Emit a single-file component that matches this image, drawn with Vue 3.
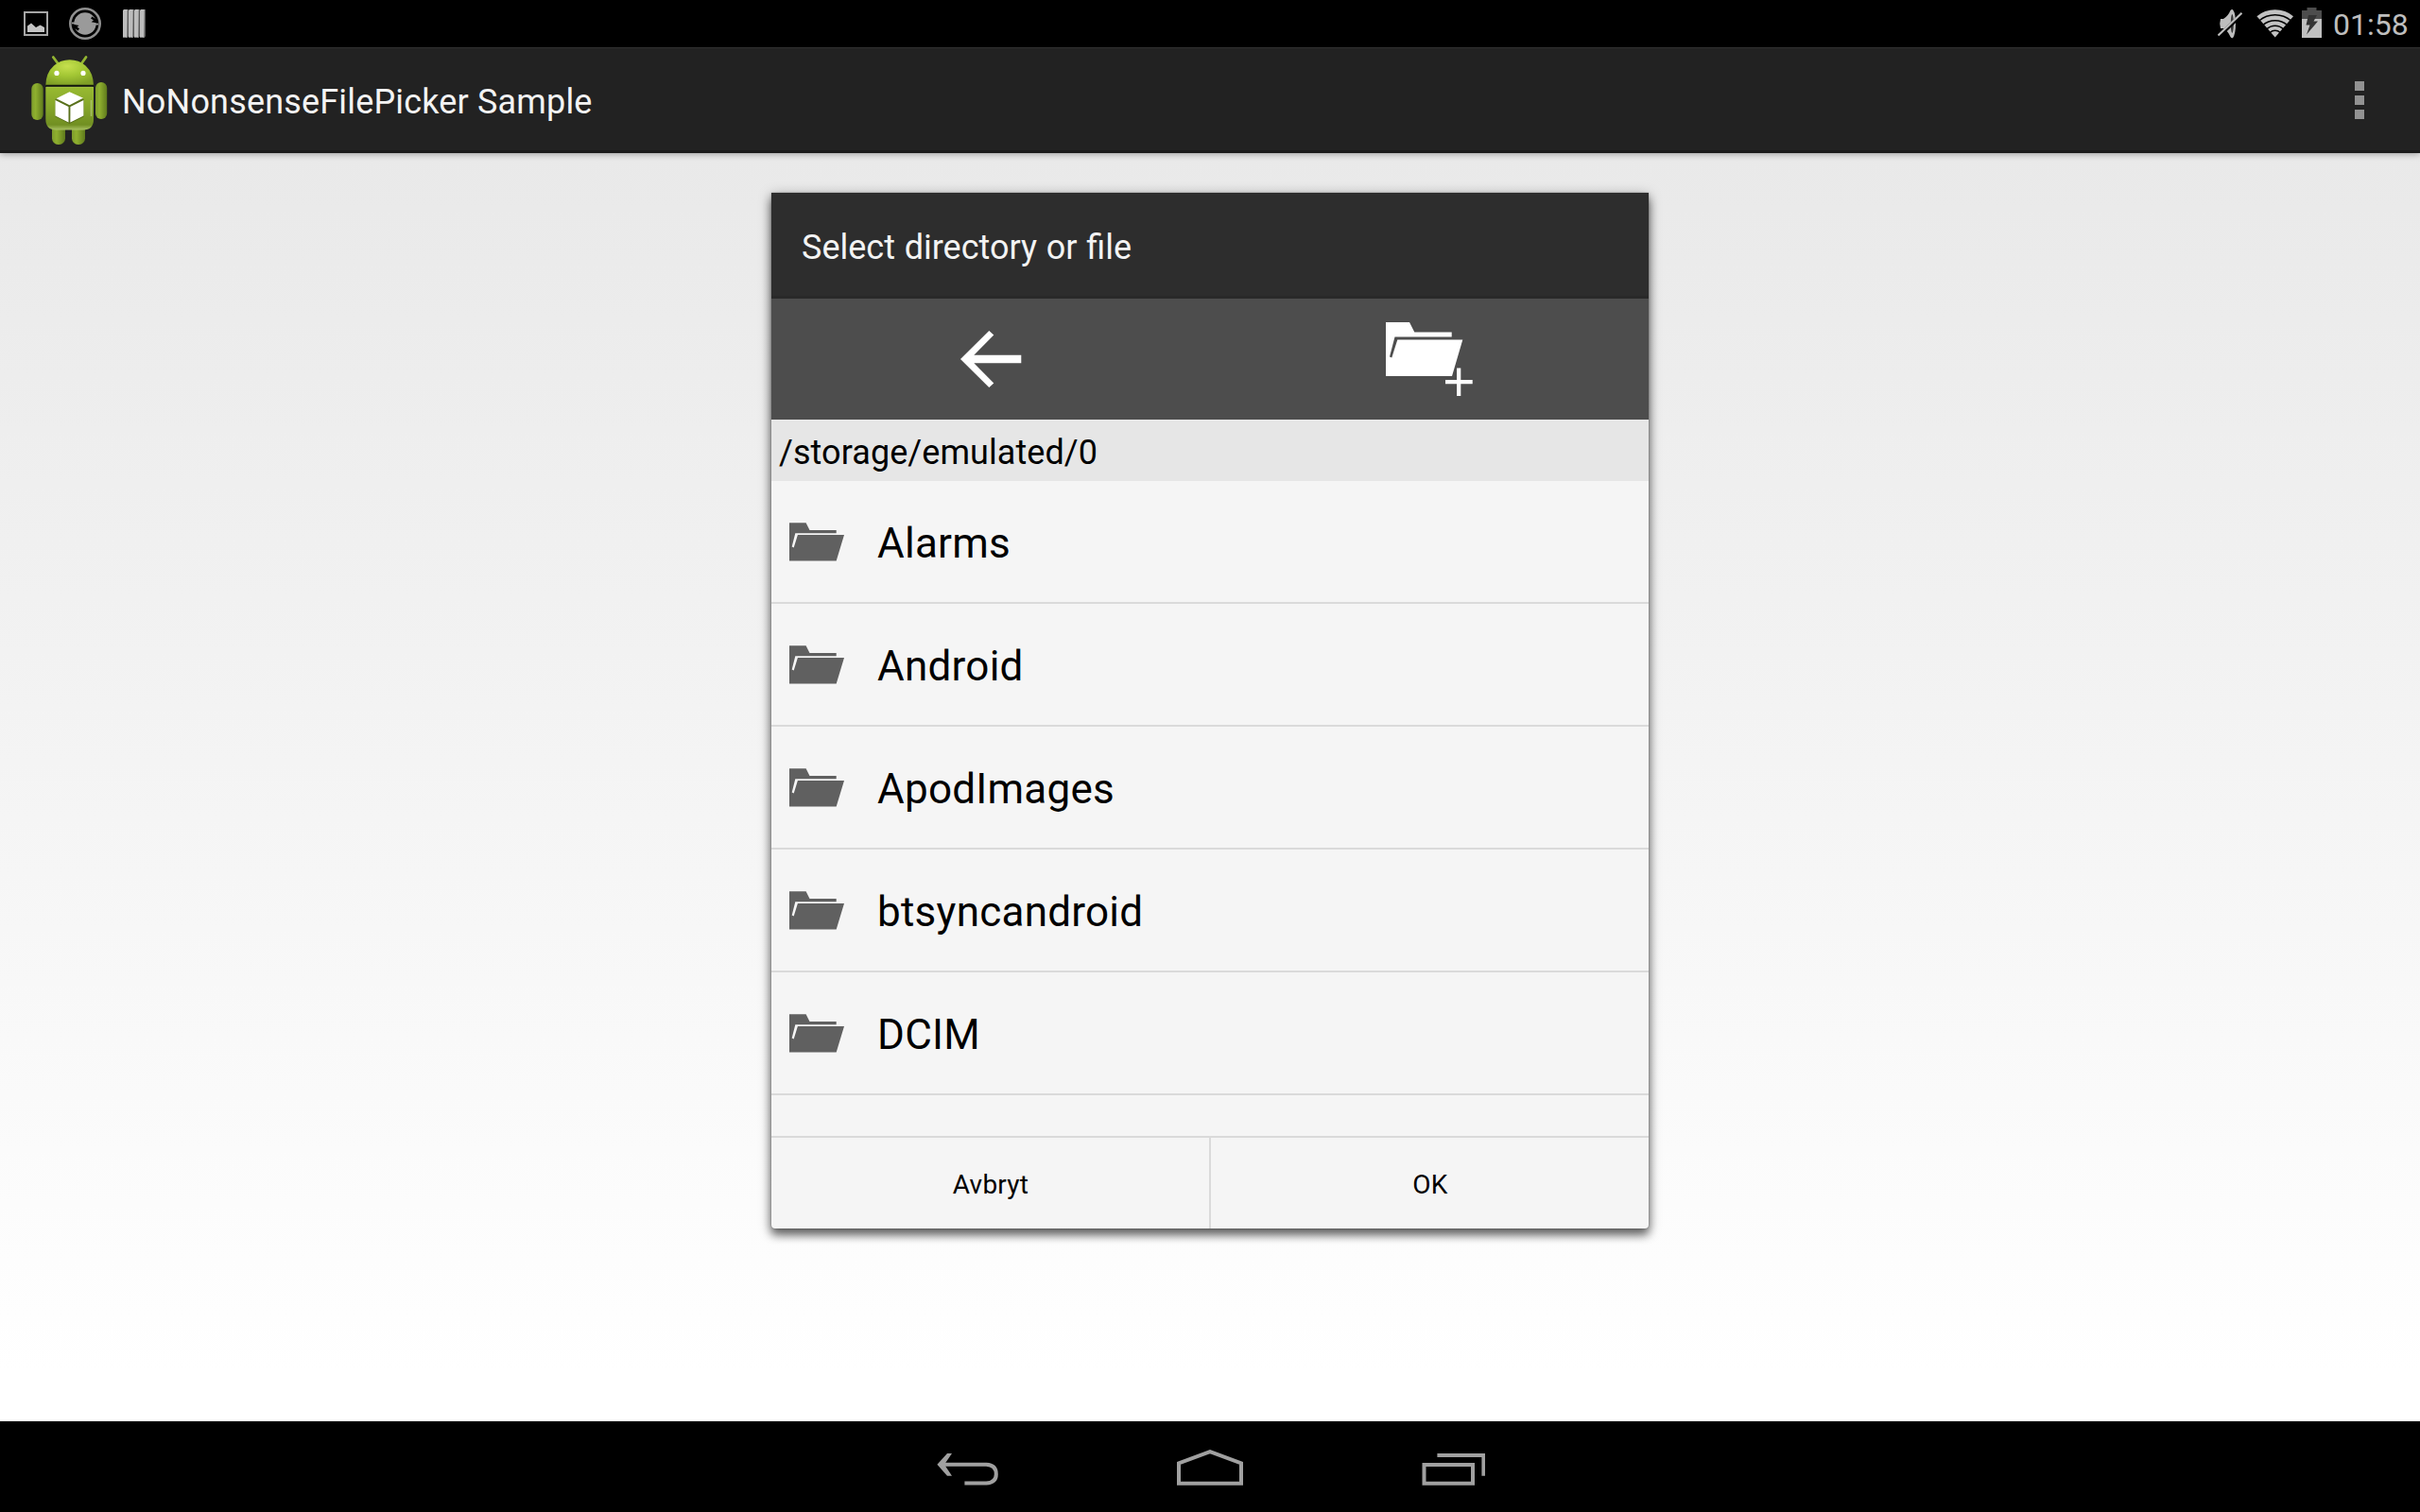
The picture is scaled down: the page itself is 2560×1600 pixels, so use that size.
<script setup>
const folders = ['Alarms', 'Android', 'ApodImages', 'btsyncandroid', 'DCIM']
</script>

<template>
  <div class="screen">
    <header class="status">
      <div class="notes">
        <svg class="s-pic" width="26" height="26" viewBox="0 0 26 26">
          <rect x="1" y="1" width="24" height="24" fill="none" stroke="#a6a6a6" stroke-width="2" />
          <path d="M4 22V15.5L8 12.500L13 17L17.500 14.500L22 17V22Z" fill="#c4c4c4" />
        </svg>
        <svg class="s-sync" width="34" height="34" viewBox="0 0 34 34">
          <circle cx="17" cy="17" r="15.700" fill="none" stroke="#8f8f8f" stroke-width="2.600" />
          <circle cx="17" cy="17" r="11.700" fill="#9a9a9a" />
          <path d="M3 16.500H9" stroke="#999" stroke-width="2" />
          <path d="M31 17.500H25" stroke="#999" stroke-width="2" />
          <path d="M3.500 17.600L10.600 19L8.500 20.500L11 22.300L9.500 24.500L4.800 21Z" fill="#000" />
          <path d="M30.500 16.400L23.600 15.200L26 13.600L23 11.600L24.500 9.500L29.200 13Z" fill="#000" />
        </svg>
        <svg class="s-bars" width="24" height="30" viewBox="0 0 24 30">
          <g v-for="i in 4" :key="i">
            <path :d="`M${(i - 1) * 6} 1L${(i - 1) * 6 + 1} 0H${(i - 1) * 6 + 5.200}V29L${(i - 1) * 6 + 4} 30H${(i - 1) * 6}Z`" fill="#bdbdbd" />
            <path :d="`M${(i - 1) * 6 + 4.600} 0H${(i - 1) * 6 + 5.600}V28.500L${(i - 1) * 6 + 3} 30H${(i - 1) * 6}V29H${(i - 1) * 6 + 4}Z`" fill="#7c7c7c" />
          </g>
        </svg>
      </div>
      <div class="system">
        <svg class="s-mute" width="26" height="32" viewBox="0 0 26 32">
          <path d="M3 11H6Q11 8 13.500 2Q14.500 .8 16 1.200Q19 5 19 16T16 31.200Q14.500 31.500 13.500 30Q11 24 6 21H3Q1.500 16 3 11Z" fill="#bebebe" />
          <ellipse cx="15.300" cy="16" rx="1.500" ry="10" fill="#000" opacity=".7" />
          <path d="M.8 29.800L26 5.800" stroke="#000" stroke-width="4" />
          <path d="M.5 28.500L25.500 4.700" stroke="#bebebe" stroke-width="2.200" />
        </svg>
        <svg class="s-wifi" width="40" height="30" viewBox="0 0 40 30">
          <path d="M20.700 29.500L1.400 7.200Q9.500 .2 20.700 .2T40 7.200Z" fill="#c2c2c2" />
          <g fill="none" stroke="#000" stroke-width="1.600">
            <path d="M3.700 12Q11.200 5.800 20.700 5.800T37.700 12" />
            <path d="M7.700 16.600Q13.200 11.700 20.700 11.700T33.700 16.600" />
            <path d="M11.700 20.800Q15.700 17.200 20.700 17.200T29.700 20.800" />
            <path d="M15.200 24.500Q17.700 22.300 20.700 22.300T26.200 24.500" />
          </g>
        </svg>
        <svg class="s-batt" width="21" height="32" viewBox="0 0 21 32">
          <path d="M0 12V3H5.500V0H15.500V3H21V12Z" fill="#4d4d4d" />
          <path d="M0 12H21V32H0Z" fill="#c0c0c0" />
          <path d="M7 8H16L12.500 14.500H17L5 28.500L8.500 18.500H4.500Z" fill="#333" />
        </svg>
        <span class="clock">01:58</span>
      </div>
    </header>

    <div class="actionbar">
      <svg class="robot" width="84" height="96" viewBox="31 58 84 96">
        <defs>
          <radialGradient id="head" cx=".45" cy=".25" r=".75">
            <stop offset="0" stop-color="#c6e04e" />
            <stop offset=".5" stop-color="#a2c634" />
            <stop offset="1" stop-color="#7f9f26" />
          </radialGradient>
          <linearGradient id="torso" x1="0" y1="0" x2="0" y2="1">
            <stop offset="0" stop-color="#98ba31" />
            <stop offset=".5" stop-color="#84a42a" />
            <stop offset=".88" stop-color="#718f22" />
            <stop offset="1" stop-color="#a9c264" />
          </linearGradient>
          <linearGradient id="limb" x1="0" y1="0" x2="1" y2="0">
            <stop offset="0" stop-color="#7d9c2c" />
            <stop offset=".35" stop-color="#8fb02f" />
            <stop offset="1" stop-color="#5f7a1c" />
          </linearGradient>
        </defs>
        <path d="M56.300 60.500L61.500 67.500M91 60.500L86 67.500" stroke="#93b532" stroke-width="2.800" stroke-linecap="round" />
        <rect x="55" y="128" width="14" height="25" rx="6.500" fill="url(#limb)" />
        <rect x="76" y="128" width="14" height="25" rx="6.500" fill="url(#limb)" />
        <rect x="33.300" y="88" width="12.400" height="39" rx="6" fill="url(#limb)" />
        <rect x="101" y="87" width="12.200" height="39" rx="6" fill="url(#limb)" />
        <path d="M48.300 92H99V126Q99 137.500 88 137.500H59.500Q48.300 137.500 48.300 126Z" fill="url(#torso)" />
        <path d="M48.300 90.500Q48.500 77 57 69.500Q64 63.300 73.700 63.300T90.500 69.500Q98.800 77 99 90.500Z" fill="url(#head)" />
        <path d="M48.300 90.600H99" stroke="#10160a" stroke-width="1.700" />
        <path d="M49 92.300H98.300" stroke="#a9c648" stroke-width=".8" />
        <path d="M96.500 106V123" stroke="#b9cf7e" stroke-width="1.500" opacity=".7" />
        <circle cx="60" cy="77.400" r="2.600" fill="#fff" />
        <circle cx="88" cy="77.400" r="2.600" fill="#fff" />
        <path d="M73.500 98L88.600 105V123.500L73.500 131L58.500 123.500V105Z" fill="#58701a" />
        <path d="M73.500 97.300L88 103.700L73.500 111.300L59.500 104.300Z" fill="#fff" />
        <path d="M58.500 106L72.500 113V129.500L58.500 122.500Z" fill="#fff" />
        <path d="M88.400 106L74.400 113V129.500L88.400 122.500Z" fill="#fff" />
      </svg>
      <h1>NoNonsenseFilePicker Sample</h1>
      <div class="overflow"><i></i><i></i><i></i></div>
    </div>

    <main class="page">
      <section class="dialog">
        <h2 class="title"><span>Select directory or file</span></h2>
        <div class="tools">
          <div class="tool">
            <svg class="arrow" width="66" height="60" viewBox="0 0 66 60">
              <path d="M0 30L30.300 0L35.300 4.500L14.300 25.800H64.300V34.200H14.300L35.300 55.500L30.300 60Z" fill="#fff" />
            </svg>
          </div>
          <div class="tool">
            <svg class="newdir" width="92" height="78" viewBox="0 0 92 78">
              <path d="M0 0H25L30.300 10.600H69.700V15.500H9.500L4 36.500L6.300 37.500L12.300 18.400H81.300L70 57H0Z" fill="#fff" />
              <path d="M63 63.200H91.700M77.200 48.500V78" stroke="#fff" stroke-width="4.200" />
            </svg>
          </div>
        </div>
        <div class="path"><span>/storage/emulated/0</span></div>
        <ul class="list">
          <li v-for="name in folders" :key="name">
            <svg width="58" height="41" viewBox="0 0 58 41">
              <path d="M0 .3H17.600L21.500 8H49.700V11.200H6.300L2.700 25.500L4.700 26.500L8.900 13H58L49.700 40.500H0Z" fill="#606060" />
            </svg>
            <span>{{ name }}</span>
          </li>
        </ul>
        <div class="buttons">
          <button><span>Avbryt</span></button>
          <button><span>OK</span></button>
        </div>
      </section>
    </main>

    <nav class="navbar">
      <svg width="66" height="36" viewBox="0 0 66 36">
        <path d="M4 13.800H52.300Q62.800 14.300 62.800 24Q62.800 33 52.300 33.500H29.400" fill="none" stroke="#a0a0a0" stroke-width="4" />
        <path d="M11 2H16L8 13.800L16 25.700H11L.4 13.800Z" fill="#a0a0a0" />
      </svg>
      <svg width="71" height="38" viewBox="0 0 71 38">
        <path d="M2 35.700V14.500L35 2.200L68 14.500V35.700Z" fill="none" stroke="#a0a0a0" stroke-width="4" />
      </svg>
      <svg width="67" height="34" viewBox="0 0 67 34">
        <path d="M2.500 12H54V31.700H2.500ZM16.400 2H65.400V23.700" fill="none" stroke="#a0a0a0" stroke-width="4" />
      </svg>
    </nav>
  </div>
</template>

<style>
body {
  margin: 0;
  background: #000;
}
</style>

<style scoped>
.screen {
  width: 2560px;
  height: 1600px;
  display: flex;
  flex-direction: column;
  overflow: hidden;
  font-family: Roboto, "Noto Sans", sans-serif;
}
svg {
  display: block;
  flex: none;
}
h1,
h2,
ul {
  margin: 0;
  padding: 0;
  font-weight: 400;
}
.status {
  height: 50px;
  flex: none;
  background: #000;
  display: flex;
  justify-content: space-between;
}
.notes,
.system {
  display: flex;
  align-items: center;
}
.notes {
  padding-left: 25px;
}
.s-sync {
  margin-left: 22px;
}
.s-bars {
  margin-left: 23px;
}
.system {
  padding-right: 12px;
}
.s-wifi {
  margin: -1px 9px 0 14px;
}
.s-batt {
  margin-right: 12px;
  margin-top: -2px;
}
.clock {
  width: 80px;
  font-size: 32px;
  line-height: 38px;
  padding-top: 2px;
  color: #bebebe;
}
.actionbar {
  height: 112px;
  flex: none;
  box-sizing: border-box;
  display: flex;
  align-items: center;
  background: #222;
  border-top: 1px solid #303030;
  border-bottom: 3px solid #1a1a1a;
  padding: 0 59px 0 31px;
  position: relative;
  box-shadow: 0 1px 7px rgba(0, 0, 0, 0.36);
}
.robot {
  margin-top: 1px;
}
h1 {
  flex: 1;
  margin-left: 14px;
  padding-top: 6px;
  font-size: 36px;
  line-height: 42px;
  letter-spacing: 0.17px;
  color: #f3f3f3;
}
.overflow {
  display: flex;
  flex-direction: column;
  gap: 5px;
  padding-top: 2px;
}
.overflow i {
  width: 10px;
  height: 10px;
  background: #929292;
}
.page {
  flex: 1;
  display: flex;
  justify-content: center;
  align-items: flex-start;
  padding-top: 42px;
  background: linear-gradient(#e9e9e9, #fff 96%);
}
.dialog {
  width: 928px;
  height: 1096px;
  display: flex;
  flex-direction: column;
  overflow: hidden;
  background: #f5f5f5;
  border-radius: 0 0 4px 4px;
  box-shadow: 0 0 2px rgba(0, 0, 0, 0.35), 0 7px 10px rgba(0, 0, 0, 0.48), 0 3px 14px rgba(0, 0, 0, 0.36);
}
.title {
  height: 112px;
  box-sizing: border-box;
  background: #2d2d2d;
  border-bottom: 3px solid #292929;
  display: flex;
  align-items: center;
  padding: 7px 0 0 32px;
  font-size: 36px;
  line-height: 42px;
  word-spacing: 0.8px;
  color: #f3f3f3;
}
.tools {
  height: 128px;
  display: flex;
  background: #4d4d4d;
}
.tool {
  flex: 1;
  display: flex;
  justify-content: center;
  align-items: flex-start;
}
.arrow {
  margin: 34px 0 0 2px;
}
.newdir {
  margin-top: 25px;
}
.path {
  height: 65px;
  box-sizing: border-box;
  display: flex;
  align-items: center;
  padding: 5px 0 0 8px;
  background: #e6e6e6;
  font-size: 36px;
  line-height: 42px;
  letter-spacing: 0.07px;
  color: #000;
}
.list {
  flex: 1;
  list-style: none;
}
.list li {
  height: 130px;
  box-sizing: border-box;
  border-bottom: 2px solid #dadada;
  display: flex;
  align-items: center;
  padding-left: 19px;
  font-size: 44px;
  line-height: 52px;
  letter-spacing: 0.25px;
  color: #000;
}
.list span {
  margin-left: 35px;
  padding-top: 4px;
}
.buttons {
  height: 98px;
  box-sizing: border-box;
  border-top: 2px solid #dadada;
  display: flex;
}
.buttons button {
  flex: none;
  width: 50%;
  box-sizing: border-box;
  border: 0;
  margin: 0;
  padding: 3px 0 0;
  background: transparent;
  font: 28px/33px Roboto, "Noto Sans", sans-serif;
  letter-spacing: 0.25px;
  color: #000;
  box-shadow: inset -1px 0 #dadada;
}
.buttons button + button {
  padding-left: 2px;
  box-shadow: inset 1px 0 #dadada;
}
.navbar {
  height: 96px;
  flex: none;
  box-sizing: border-box;
  background: #000;
  display: flex;
  justify-content: center;
  align-items: flex-start;
  gap: 188px;
  padding: 32px 0 0 2px;
}
.navbar svg:nth-child(2) {
  margin-top: -2px;
}
.navbar svg:nth-child(3) {
  margin-top: 2px;
}
</style>
